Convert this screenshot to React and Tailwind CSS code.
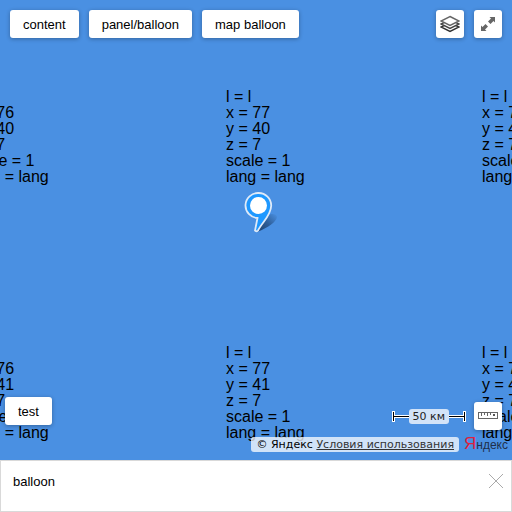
import React from "react";

const COLUMNS = [
  { x: 76, place: "-left-[30px]" },
  { x: 77, place: "left-[226px]" },
  { x: 78, place: "left-[482px]" },
];
const ROWS = [
  { y: 40, place: "top-[89px]" },
  { y: 41, place: "top-[345px]" },
];

function TileLabel({ x, y, place }) {
  return (
    <div className={`absolute whitespace-nowrap text-base leading-4 text-black ${place}`}>
      <div>l = l</div>
      <div>x = {x}</div>
      <div>y = {y}</div>
      <div>z = 7</div>
      <div>scale = 1</div>
      <div>lang = lang</div>
    </div>
  );
}

function MapButton({ children }) {
  return (
    <button
      type="button"
      className="h-7 rounded-[3px] bg-white px-[13px] pt-px text-[13px] leading-7 text-black shadow-[0_1px_4px_rgba(0,0,0,0.3)]"
    >
      {children}
    </button>
  );
}

function IconButton({ label, children }) {
  return (
    <button
      type="button"
      aria-label={label}
      className="flex size-7 items-center justify-center rounded-[3px] bg-white shadow-[0_1px_4px_rgba(0,0,0,0.3)]"
    >
      {children}
    </button>
  );
}

function LayersIcon() {
  return (
    <svg width="20" height="18" viewBox="0 0 20 18" fill="white" strokeWidth="1.5">
      <path d="M10 7.5 19 12l-9 4.5L1 12z" stroke="#333" />
      <path d="M10 4.5 19 9l-9 4.5L1 9z" stroke="#444" />
      <path d="M10 1.5 19 6l-9 4.5L1 6z" stroke="#666" />
    </svg>
  );
}

function ExpandIcon() {
  return (
    <svg width="14" height="14" viewBox="0 0 14 14" fill="#666">
      <path d="M8.5 0H14v5.5L12.5 4 9.5 7 7 4.5l3-3z" />
      <path d="M5.5 14H0V8.5L1.5 10l3-3L7 9.5l-3 3z" />
    </svg>
  );
}

function RulerIcon() {
  return (
    <svg width="20" height="8" viewBox="0 0 20 8" fill="none" stroke="#666">
      <rect x="0.5" y="0.5" width="19" height="6" />
      <path d="M3.5 1v3M6.5 1v2M9.5 1v3M12.5 1v2" />
      <rect x="15" y="2" width="2" height="2" fill="#555" stroke="none" />
    </svg>
  );
}

function Placemark() {
  return (
    <svg
      className="absolute left-[243px] top-[190px]"
      width="38"
      height="46"
      viewBox="0 0 38 46"
      role="img"
      aria-label="Placemark"
    >
      <defs>
        <linearGradient id="pinShade" x1="0" y1="1" x2="1" y2="0">
          <stop offset="0" stopColor="#102a4c" stopOpacity="0.8" />
          <stop offset="0.5" stopColor="#102a4c" stopOpacity="0.5" />
          <stop offset="1" stopColor="#102a4c" stopOpacity="0" />
        </linearGradient>
      </defs>
      <path d="M14 42 L24 25 C29 23 34 24 34 27 C33 32 26 37 14 42z" fill="url(#pinShade)" />
      <path
        d="M15.5 3 A12.5 12.5 0 0 1 28.2 15.5 C28 26 19 32 15 40.5 Q14 42 12 40.500 L14.500 28 A12.5 12.5 0 0 1 15.500 3z"
        fill="#1e98ff"
        stroke="#dfeaf8"
        strokeWidth="1.8"
      />
      <circle cx="15.5" cy="15.5" r="8.5" fill="#fff" />
    </svg>
  );
}

function ScaleEnd({ flip }) {
  return (
    <svg width="17" height="11" viewBox="0 0 17 11" className={flip ? "-scale-x-100" : ""}>
      <path d="M0 0h3v4h14v3H3v4H0z" fill="#fff" />
      <path d="M1 1h1v4h15v1H2v4H1z" fill="#000" />
    </svg>
  );
}

export default function App() {
  return (
    <div className="flex min-h-screen flex-col font-['Liberation_Sans',Arial,sans-serif]">
      <main className="relative flex flex-1 flex-col justify-between overflow-hidden bg-[#4a90e2]">
        {ROWS.map((row) =>
          COLUMNS.map((col) => (
            <TileLabel key={`${col.x}-${row.y}`} x={col.x} y={row.y} place={`${col.place} ${row.place}`} />
          ))
        )}
        <Placemark />

        <div className="relative flex justify-between p-2.5">
          <div className="flex gap-2.5">
            <MapButton>content</MapButton>
            <MapButton>panel/balloon</MapButton>
            <MapButton>map balloon</MapButton>
          </div>
          <div className="flex gap-2.5">
            <IconButton label="Layers">
              <LayersIcon />
            </IconButton>
            <IconButton label="Fullscreen">
              <ExpandIcon />
            </IconButton>
          </div>
        </div>

        <div className="relative pb-1">
          <div className="flex items-start justify-between pl-[5px] pr-2.5">
            <MapButton>test</MapButton>
            <div className="flex items-center gap-2 pt-[5px] font-['DejaVu_Sans',sans-serif]">
              <div className="flex items-center">
                <ScaleEnd />
                <span className="rounded-[3px] bg-[#d2e3f8] px-1 text-[11px] leading-[15px] text-[#222]">
                  50 км
                </span>
                <ScaleEnd flip />
              </div>
              <IconButton label="Ruler">
                <RulerIcon />
              </IconButton>
            </div>
          </div>
          <div className="flex items-center justify-end gap-[5px] pr-1 pt-[3px]">
            <div className="whitespace-nowrap rounded-[3px] bg-white/75 px-[5px] font-['DejaVu_Sans',sans-serif] text-[11px] leading-[15px] text-black">
              © Яндекс{" "}
              <a href="#terms" className="text-[#333] underline">
                Условия использования
              </a>
            </div>
            <a href="#yandex" className="text-xs leading-[22px] text-[#1f2f4a]">
              <span className="text-[17px] leading-[22px] text-[#e0203c]">Я</span>ндекс
            </a>
          </div>
        </div>
      </main>

      <section className="flex items-start justify-between border border-[#d9d9d9] bg-white px-3 pb-[19px] pt-[11px] text-[13px] leading-5 text-black">
        <p className="min-h-5">balloon</p>
        <button type="button" aria-label="Close" className="-mr-[5px] p-px pt-0.5">
          <svg width="14" height="14" viewBox="0 0 14 14" stroke="#aaa" strokeWidth="1">
            <path d="M0 0 14 14M14 0 0 14" />
          </svg>
        </button>
      </section>
    </div>
  );
}
